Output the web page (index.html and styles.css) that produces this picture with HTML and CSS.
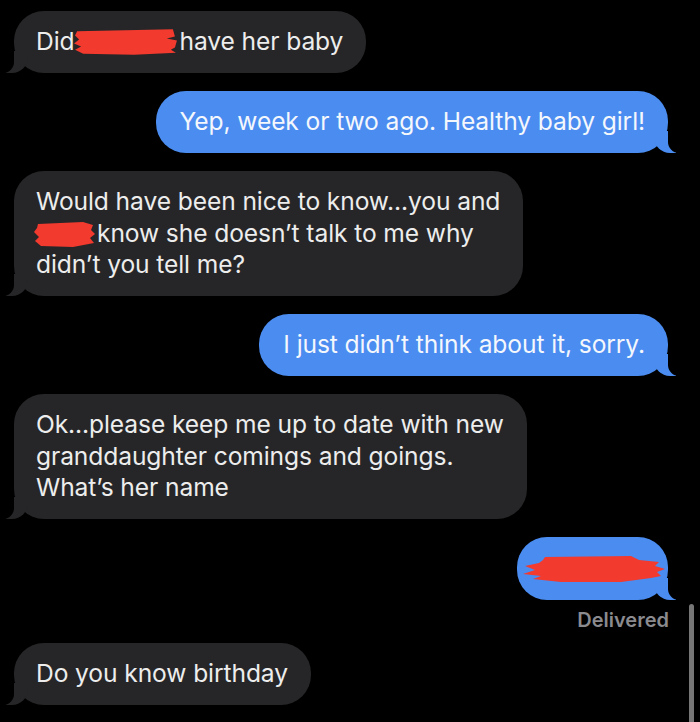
FILE: index.html
```html
<!DOCTYPE html>
<html lang="en">
<head>
  <meta charset="UTF-8" />
  <title>Messages</title>
  <meta name="viewport" content="width=device-width, initial-scale=1.0" />
  <link rel="stylesheet" href="styles.css">
</head>
<body>
  <div class="thread">
    <div class="bubble received">Did<svg class="redact r1" viewBox="0 0 104 28"><path d="M4 4 L98 2 L100 9 L92 11 L102 13 L100 20 L96 22 L101 25 L60 27 L10 26 L2 22 L8 19 L1 16 L6 12 L2 8 Z" /></svg>have her baby</div>

    <div class="bubble sent">Yep, week or two ago. Healthy baby girl!</div>

    <div class="bubble received">Would have been nice to know...you and<br><svg class="redact r2" viewBox="0 0 64 28"><path d="M5 4 L50 2 L60 5 L58 10 L62 14 L57 18 L61 23 L40 27 L8 26 L2 21 L6 17 L1 12 L4 8 Z" /></svg>know she doesn’t talk to me why<br>didn’t you tell me?</div>

    <div class="bubble sent">I just didn’t think about it, sorry.</div>

    <div class="bubble received">Ok...please keep me up to date with new<br>granddaughter comings and goings.<br>What’s her name</div>

    <div class="bubble sent photo-name"><svg class="redact r3" viewBox="0 0 144 30"><path d="M24 3 L110 2 L118 6 L138 8 L134 12 L144 15 L136 18 L140 22 L130 24 L100 28 L40 28 L12 25 L20 22 L2 20 L14 16 L4 12 L18 9 L22 6 Z" /></svg></div>
    <div class="delivered">Delivered</div>

    <div class="bubble received">Do you know birthday</div>
  </div>
  <div class="scrollbar"></div>
</body>
</html>
```

FILE: styles.css
```css
body {
  margin: 0;
  background-color: #000;
  color: #f2f2f2;
  font-family: Inter, "Noto Sans", sans-serif;
  height: 722px;
  overflow: hidden;
  position: relative;
}

.thread {
  display: flex;
  flex-direction: column;
  gap: 18.5px;
  padding: 11px 32px 0 14px;
}

.bubble {
  position: relative;
  font-size: 24.6px;
  line-height: 31.5px;
  padding: 15px 23px 15px 22px;
  border-radius: 30px;
  width: fit-content;
  letter-spacing: -0.1px;
}

.received {
  align-self: flex-start;
  background-color: #262628;
  color: #ededed;
}

.sent {
  align-self: flex-end;
  background-color: #4a8cf0;
  color: #f4f7fc;
  padding-left: 24px;
}

/* bubble tails */
.received::before,
.sent::before {
  content: "";
  position: absolute;
  bottom: 0;
  height: 22px;
  width: 22px;
}

.received::after,
.sent::after {
  content: "";
  position: absolute;
  bottom: 0;
  height: 22px;
  width: 12px;
  background-color: #000;
}

.received::before {
  left: -8px;
  background-color: #262628;
  border-bottom-right-radius: 16px;
}

.received::after {
  left: -12px;
  border-bottom-right-radius: 11px;
}

.sent::before {
  right: -8px;
  background-color: #4a8cf0;
  border-bottom-left-radius: 16px;
}

.sent::after {
  right: -12px;
  border-bottom-left-radius: 11px;
}

.redact {
  display: inline-block;
  vertical-align: middle;
  fill: #f23a2e;
}

.r1 {
  width: 106px;
  height: 29px;
  margin: -4px 0 0 -1px;
}

.r2 {
  width: 64px;
  height: 28px;
  margin: -2px 0 0 -3px;
}

.photo-name {
  padding: 17px 3px 16px 4px;
  line-height: 0;
}

.r3 {
  width: 144px;
  height: 30px;
}

.delivered {
  align-self: flex-end;
  margin: -10px -1px -6px 0;
  font-size: 20px;
  line-height: 22px;
  font-weight: 600;
  color: #8a8a8f;
}

.scrollbar {
  position: absolute;
  right: 6px;
  top: 604px;
  width: 5px;
  height: 130px;
  border-radius: 3px;
  background-color: #767676;
}
```
